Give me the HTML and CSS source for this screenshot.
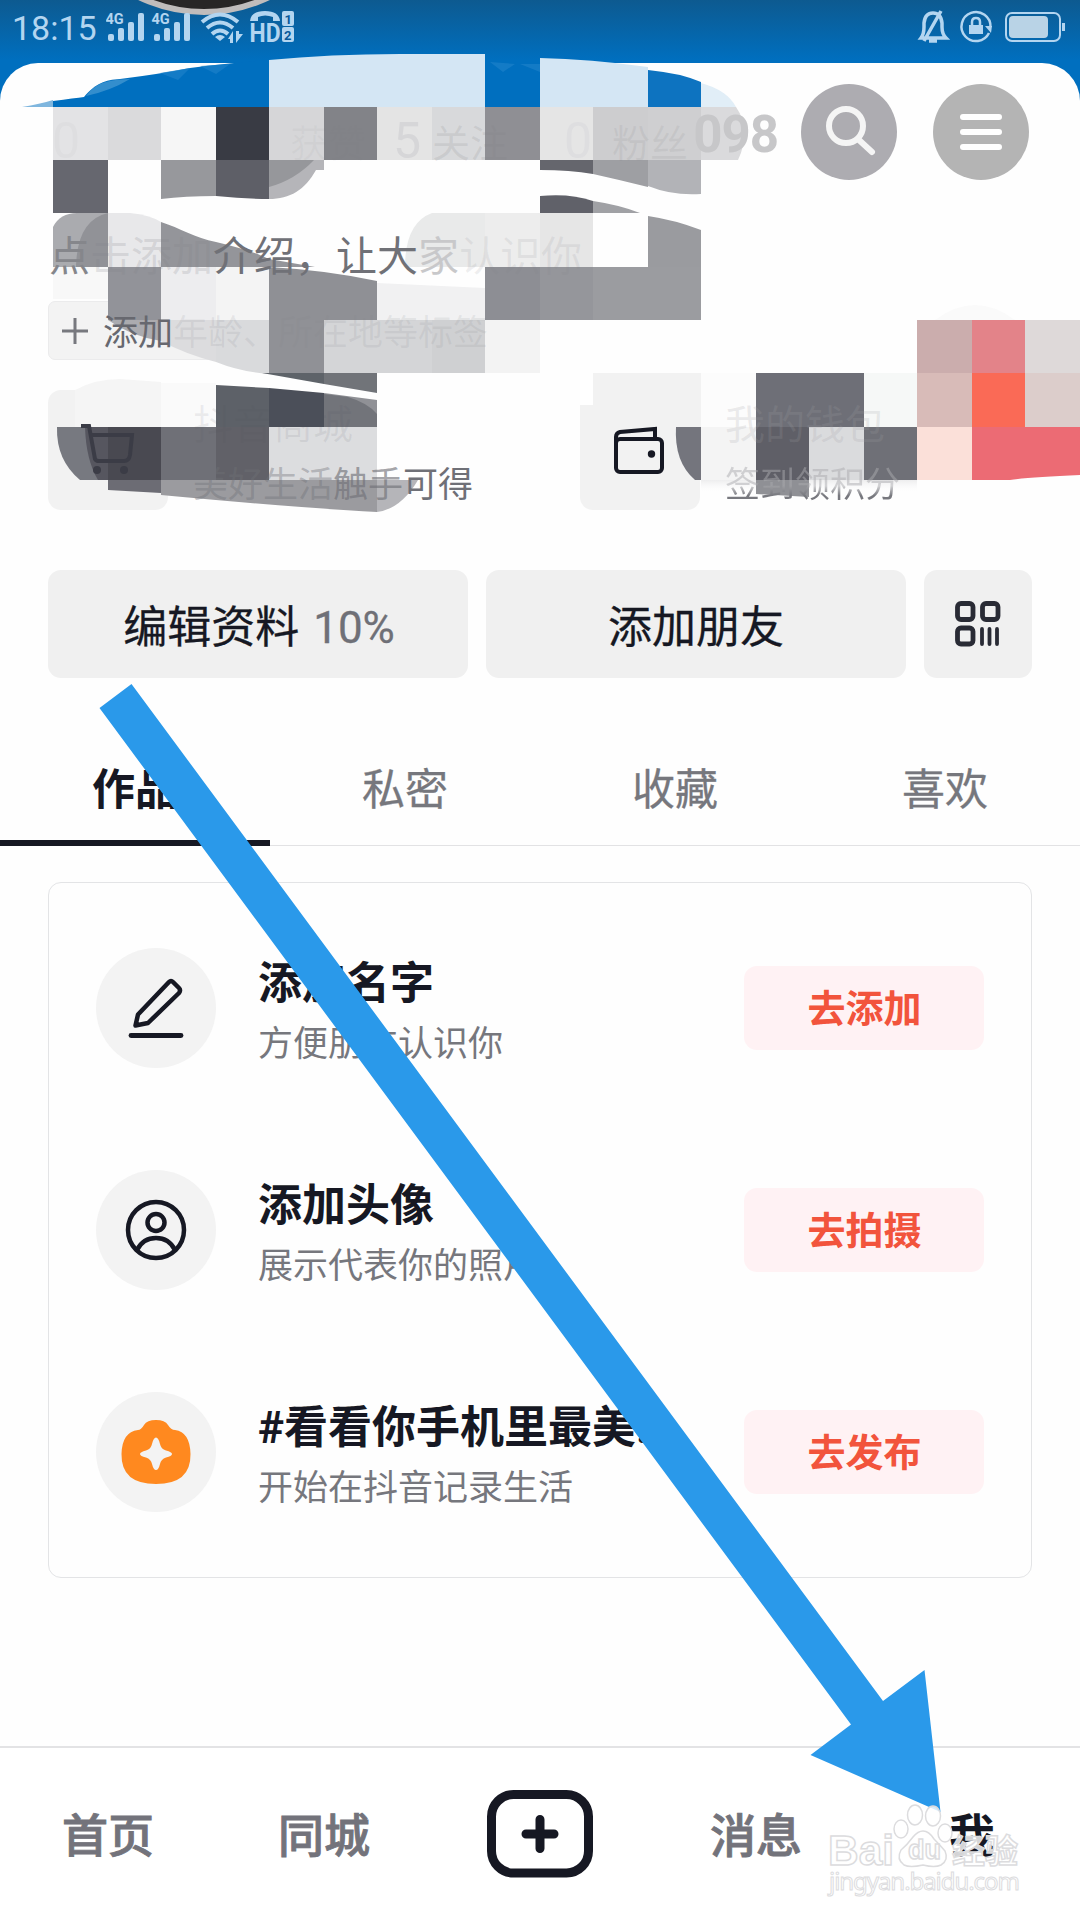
FILE: index.html
```html
<!DOCTYPE html>
<html lang="zh-CN">
<head>
<meta charset="utf-8">
<title>我</title>
<link rel="stylesheet" href="styles.css">
</head>
<body>
<div class="screen">
  <header class="status">
    <svg class="cover" width="150" height="20" viewBox="130 0 150 20"><circle cx="204" cy="-137" r="149" fill="#282626" stroke="#c0bcbb" stroke-width="6"/></svg>
    <div class="status-left">
      <span class="clock">18:15</span>
      <svg width="190" height="44" viewBox="106 0 190 44" fill="#b3d5f0">
        <g id="sig"><text x="105.500" y="24" class="net">4G</text><rect x="108" y="34" width="6" height="7" rx="2"/><rect x="118" y="28" width="6" height="13" rx="2"/><rect x="128" y="22" width="6" height="19" rx="2"/><rect x="138" y="13" width="6" height="28" rx="2"/></g>
        <use href="#sig" x="46"/>
        <g fill="none" stroke="#b3d5f0" stroke-width="4"><path d="M202 22Q220 7 238 22M207 28Q220 17 233 28M212 34Q220 27 228 34"/></g>
        <path d="M215 37Q220 33 225 37L220 41ZM228 39L233 31V43H230V39ZM236 31V43L243 34H239V31Z"/>
        <path d="M250 21Q251 11 265 11Q279 11 280 21H273V17Q265 14 258 17V21Z"/>
        <text x="249.500" y="42" class="hd" textLength="31" lengthAdjust="spacingAndGlyphs">HD</text>
        <rect x="282" y="11" width="12" height="15" rx="2"/><rect x="282" y="27" width="12" height="15" rx="2"/>
        <text x="284.500" y="24" class="sim">1</text><text x="284" y="40" class="sim">2</text>
      </svg>
    </div>
    <svg width="150" height="44" viewBox="916 0 150 44" fill="none" stroke="#b3d5f0" stroke-width="3.500">
      <path d="M921 38Q924 34 924 27V23Q925 13 933 13Q941 13 942 23V27Q942 34 946 38ZM924 41L941 11M929 41H937"/>
      <path d="M989 33A14.500 14.500 0 1 1 990.500 27" stroke-width="2.500"/><path d="M985 26H992L991 33Z" fill="#b3d5f0" stroke="none"/>
      <rect x="969" y="25" width="14" height="9" fill="#b3d5f0" stroke="none"/><path d="M972 25V22Q972 18 976 18Q980 18 980 22V25" stroke-width="2.500"/>
      <rect x="1006" y="13" width="54" height="28" rx="6" stroke-width="2"/><rect x="1009" y="16" width="39" height="22" rx="4" fill="#b9d3e6" stroke="none"/><path d="M1063.500 23V31" stroke-width="3"/>
    </svg>
  </header>

  <main class="sheet">
    <div class="topbar">
      <span class="account">098</span>
      <button class="round search" aria-label="搜索"><svg width="96" height="96" viewBox="0 0 96 96" fill="none" stroke="#f5f5f5" stroke-width="6" stroke-linecap="round"><circle cx="45" cy="42" r="17"/><path d="M58 56L71 68"/></svg></button>
      <button class="round menu" aria-label="菜单"><svg width="96" height="96" viewBox="0 0 96 96" stroke="#fff" stroke-width="6" stroke-linecap="round"><path d="M30 33H66M30 48H66M30 63H66"/></svg></button>
    </div>
    <p class="bio"><span class="dim1">点</span><span class="dim2">击添加</span>介绍，让大<span class="dim3">家</span><span class="dim4">认识你</span></p>
    <div class="tag"><svg width="28" height="28" viewBox="0 0 28 28" stroke="#77787e" stroke-width="3"><path d="M1 14H27M14 1V27"/></svg><span class="tag-text">添加<span class="dim5">年龄、所在地等标签</span></span></div>
    <div class="services">
      <div class="service">
        <div class="service-icon"></div>
        <div class="service-text"><div class="service-title ghost-dark">抖音商城</div><div class="service-sub"><span class="dim6">美好生活</span><span class="dim7">触手</span>可得</div></div>
      </div>
      <div class="service">
        <div class="service-icon"></div>
        <div class="service-text"><div class="service-title ghost-light">我的钱包</div><div class="service-sub fade-up">签到领积分</div></div>
      </div>
    </div>
    <div class="actions">
      <button class="action wide">编辑资料<span class="percent">10%</span></button>
      <button class="action wide">添加朋友</button>
      <button class="action qr" aria-label="二维码"><svg width="48" height="48" viewBox="0 0 48 48" fill="none" stroke="#292b35" stroke-width="4.800"><rect x="3.500" y="3.500" width="15.500" height="16" rx="3.500"/><rect x="28.500" y="3.500" width="15.500" height="16" rx="3.500"/><rect x="3.500" y="28" width="15.500" height="16" rx="3.500"/><path stroke-width="3.800" stroke-linecap="round" d="M28 29V44M35.500 29V44M43 29V44"/></svg></button>
    </div>
    <nav class="tabs"><a class="tab active">作品</a><a class="tab">私密</a><a class="tab">收藏</a><a class="tab">喜欢</a></nav>
    <section class="card">
      <div class="task">
        <div class="badge"><svg width="60" height="66" viewBox="126 975 60 66" fill="none" stroke="#161823" stroke-width="4.500" stroke-linejoin="round" stroke-linecap="round"><path d="M169 982Q171 980 173 982L179 988Q181 990 179 993L148 1023L135.500 1025.500L138 1014.500Z"/><path d="M131 1035.500H181" stroke-width="4.800"/></svg></div>
        <div class="task-text"><h3>添加名字</h3><p>方便朋友认识你</p></div>
        <button class="go">去添加</button>
      </div>
      <div class="task">
        <div class="badge"><svg width="64" height="64" viewBox="0 0 64 64" fill="none" stroke="#161823" stroke-width="4.500"><circle cx="32" cy="32" r="28"/><circle cx="32" cy="24.500" r="8.500"/><path d="M13 52Q19 40 32 40T51 52"/></svg></div>
        <div class="task-text"><h3>添加头像</h3><p>展示代表你的照片</p></div>
        <button class="go">去拍摄</button>
      </div>
      <div class="task">
        <div class="badge"><svg width="72" height="66" viewBox="120 1419 72 66"><path fill="#ff891f" d="M138 1430Q141 1430 144 1425Q147 1420 156 1420Q165 1420 168 1425Q171 1430 175 1430Q190 1432 190.500 1454Q191 1484 156 1484Q121 1484 121.500 1454Q122 1432 138 1430Z"/><path fill="#f3f3f3" d="M156 1437.500Q158.500 1437.500 160 1444Q161 1449 166 1450.500Q172 1452 172 1454Q172 1456 166 1457.500Q161 1459 160 1464Q158.500 1470 156 1470Q153.500 1470 152 1464Q151 1459 146 1457.500Q140 1456 140 1454Q140 1452 146 1450.500Q151 1449 152 1444Q153.500 1437.500 156 1437.500Z"/></svg></div>
        <div class="task-text"><h3>#看看你手机里最美...</h3><p>开始在抖音记录生活</p></div>
        <button class="go">去发布</button>
      </div>
    </section>
  </main>

  <footer class="nav">
    <a>首页</a><a>同城</a>
    <a class="create"><svg width="106" height="88" viewBox="0 0 106 88" fill="none" stroke="#161823" stroke-width="9"><rect x="4.500" y="4.500" width="97" height="78.500" rx="22"/><path d="M39 44H67M53 29.500V58.500" stroke-linecap="round"/></svg></a>
    <a>消息</a><a class="me">我</a>
  </footer>

  <!-- pixelated areas over the profile header -->
  <svg class="mosaic" width="1080" height="470" viewBox="0 50 1080 470">
    <defs><linearGradient id="mist" x1="0" y1="0" x2="0" y2="1"><stop offset="0" stop-color="#ededee"/><stop offset="1" stop-color="#fff" stop-opacity="0"/></linearGradient></defs>
    <path fill="#006fbf" d="M53 101Q75 98 84 97C96 83 105 80 120 79Q160 74 190 68Q235 62 269 60V107H53Z"/>
    <path fill="#7fb6de" d="M22 107Q40 104 53 100V107Z"/>
    <path fill="#489bd3" opacity=".7" d="M86 96C96 83 105 80 130 79Q110 91 86 96Z"/>
    <rect x="485" y="60" width="55" height="47" fill="#006fbf"/>
    <path fill="#1b80c9" opacity=".7" d="M160 73L190 68L178 80ZM200 66L230 64L216 74ZM490 62L515 64L503 72ZM520 64H540V72Z"/>
    <path fill="#d4e6f4" d="M269 60Q330 54 400 54H485V107H269ZM540 58Q590 59 648 67V107H540Z"/>
    <path fill="#0d73c0" d="M648 70Q680 73 701 82V107H648Z"/><path fill="#e1eef7" d="M701 83Q727 90 736 107H701Z"/>
    <g>
      <path fill="#e3e3e5" d="M53 107h55v53H53Z"/><path fill="#dadadc" d="M108 107h53v53h-53Z"/><path fill="#f6f6f6" d="M161 107h55v53h-55Z"/><path fill="#393b44" d="M216 107h53v53h-53Z"/><path fill="#d6d6d8" d="M269 107h55v53h-55Z"/><path fill="#828388" d="M324 107h53v53h-53Z"/><path fill="#e4e4e4" d="M377 107h55v53h-55Z"/><path fill="#d8d9db" d="M432 107h53v53h-53Z"/><path fill="#8f8f94" d="M485 107h55v53h-55Z"/><path fill="#e5e5e5" d="M540 107h53v53h-53Z"/><path fill="#cdcdcf" d="M593 107h55v53h-55Z"/><path fill="#cfcfd1" d="M648 107h53v53h-53Z"/><path fill="#dadadc" d="M701 107H736Q752 130 738 160H701Z"/>
    </g>
    <g>
      <path fill="#66676f" d="M53 160h55v53H53Z"/><path fill="#97989c" d="M161 160H216V196Q185 196 161 199Z"/><path fill="#5e5f67" d="M216 160H269V199Q245 199 216 196Z"/><path fill="#b5b5b9" d="M269 160H324V170H316C305 190 290 199 269 199Z"/><path fill="#96979b" d="M269 160H314Q295 180 269 187Z"/>
      <path fill="#65666d" d="M540 160H593V174Q570 170 540 170Z"/><path fill="#9e9fa3" d="M593 160H648V187Q620 180 593 174Z"/><path fill="#b2b3b7" d="M648 160H701V194Q673 196 648 186Z"/>
      <path fill="#606169" d="M540 196Q570 193 593 201V213H540Z"/><path fill="#a0a1a5" d="M593 201Q620 205 640 213H593Z"/>
    </g>
    <g>
      <path fill="#aaabaf" d="M53 267V227Q60 213 77 213H108V267Z"/><path fill="#919297" d="M76 267Q77 220 108 213V267Z"/><path fill="#e8e8ea" d="M108 213H130Q150 215 161 222V267H108Z"/><path fill="#94959a" d="M161 222C180 228 195 238 216 242Q250 250 269 259L315 267H161Z"/>
      <path fill="#e9eaea" d="M432 213H485V267H405Q405 223 432 213Z"/><path fill="#ededed" d="M485 213h55v54h-55Z"/><path fill="#e6e6e6" d="M540 213h53v54h-53Z"/><path fill="#9a9b9f" d="M648 216Q675 220 701 230V267H648Z"/>
    </g>
    <g>
      <path fill="#f8f8f8" d="M53 267h55v32H53Z"/><path fill="#929399" d="M108 267h53v53h-53Z"/><path fill="#ededef" d="M161 267h55v53h-55Z"/><path fill="#f4f4f4" d="M216 267h53v53h-53Z"/><path fill="#8f9095" d="M269 267Q325 270 377 281V320H269Z"/><path fill="#f1f1f2" d="M377 283L485 288V320H377Z"/><path fill="#8d8e94" d="M485 267h55v53h-55Z"/><path fill="#95969b" d="M540 267h53v53h-53Z"/><path fill="#9b9ca0" d="M593 267h108v53H593Z"/>
    </g>
    <g>
      <path fill="#ababaf" d="M108 320H161V341Q130 336 108 320Z"/><path fill="#dcdcde" d="M161 320H216V362Q185 354 161 341Z"/><path fill="#d9dadc" d="M216 320H269V374Q241 372 216 362Z"/><path fill="#909196" d="M269 320h55v53h-55Z"/><path fill="#d4d5d7" d="M324 320h108v53H324Z"/><path fill="#cfd0d2" d="M432 320h53v53h-53Z"/><path fill="#f3f3f3" d="M485 320h55v53h-55Z"/>
      <path fill="#cbadad" d="M917 320h55v53h-55Z"/><path fill="#e38389" d="M972 320h53v53h-53Z"/><path fill="#ded9d9" d="M1025 320h55v53h-55Z"/><path fill="#fafafa" d="M935 320Q975 290 1015 320Z"/>
    </g>
    <g>
      <path fill="#f5f5f5" d="M75 390Q95 379 120 379L161 382V427H75Z"/><path fill="#fafafa" d="M161 383h55v44h-55Z"/><path fill="#5e6369" d="M262 373H324V384Z"/><path fill="#717479" d="M324 373H377V393L324 384Z"/><path fill="#5d6168" d="M216 385L269 388V427H216Z"/><path fill="#4b4f59" d="M269 388L324 393V427H269Z"/><path fill="#909196" d="M324 393L377 400V427H324Z"/><path fill="#72747a" d="M324 394L348 397Q368 403 377 414V427H324Z"/>
      <path fill="#fff" d="M580 380h13v25h-13Z"/><path fill="#f2f2f2" d="M593 373h108v54H593Z"/><path fill="#fcfcfc" d="M701 373h55v54h-55Z"/><path fill="#6e6f77" d="M756 373h108v54H756Z"/><path fill="#f6f8f7" d="M864 373h53v54h-53Z"/><path fill="#d8bbb8" d="M917 373h55v54h-55Z"/><path fill="#fa6a56" d="M972 373h53v54h-53Z"/><path fill="#dccdcb" d="M1025 373h55v54h-55Z"/>
    </g>
    <g>
      <path fill="#777980" d="M57 427H108V480H80Q56 460 57 427Z"/><path fill="#56565f" d="M85 427H108V480H98Q86 460 85 427Z"/><path fill="#494951" d="M108 427h53v53h-53Z"/><path fill="#6f7077" d="M161 427h55v53h-55Z"/><path fill="#616168" d="M216 427h53v53h-53Z"/><path fill="#dcdddf" d="M269 427h108v53H269Z"/>
      <path fill="#74757d" d="M676 427H701V480H695Q674 462 676 427Z"/><path fill="#f4f4f4" d="M701 427h55v53h-55Z"/><path fill="#5f5f67" d="M756 427h53v53h-53Z"/><path fill="#dadbdd" d="M809 427h55v53h-55Z"/><path fill="#6f7077" d="M864 427h53v53h-53Z"/><path fill="#fbe0d9" d="M917 427h55v53h-55Z"/><path fill="#ec6b74" d="M972 427H1080V475Q1030 477 1010 480H972Z"/>
      <path fill="#6c6c74" d="M108 480H161V493L108 490Z"/><path fill="#9b9b9f" d="M161 480H377V512Q300 508 161 495Z"/><path fill="#b5b5b9" d="M377 480H418Q401 509 377 512Z"/>
      <path fill="url(#mist)" d="M701 480H917V493H701Z"/><path fill="#8f9095" d="M756 480H809V497L756 494Z"/>
    </g>
    <g fill="none" stroke="#3b3c46" stroke-width="4"><path d="M81 426H89L95 459Q96 461 99 461H124Q129 461 130 455L132 435H91"/></g><circle cx="97" cy="470" r="4" fill="#3b3c46"/><circle cx="124" cy="470" r="4" fill="#3b3c46"/>
    <g fill="none" stroke="#161823" stroke-width="4"><rect x="616" y="439" width="46" height="33" rx="4"/><path d="M616 447V437Q616 433 620 432L655 429V439"/></g><circle cx="651.500" cy="454" r="3.700" fill="#161823"/>
    <g class="stat"><text x="52" y="158" fill="#dedee0">0</text><text x="393" y="158" fill="#d6d6d8">5</text><text x="564" y="158" fill="#dedee0">0</text><g class="stat-label"><text x="290" y="157" fill="#808186" fill-opacity=".06">获赞</text><text x="432" y="157" fill="#808186" fill-opacity=".16">关注</text><text x="612" y="157" fill="#808186" fill-opacity=".12">粉丝</text></g></g>
  </svg>

  <svg class="arrow" width="842" height="1130" viewBox="99 683 842 1130"><path fill="#2a99ea" d="M131.500 684L883 1701L924.500 1670L940.500 1812L810.500 1755L851 1724.500L99.500 708Z"/></svg>

  <svg class="watermark" width="200" height="100" viewBox="824 1800 200 100">
    <g fill="#fff" fill-opacity=".82" stroke="#dcdcde" stroke-width="1.500">
      <ellipse cx="901" cy="1829" rx="7" ry="9"/><ellipse cx="915" cy="1815" rx="7.500" ry="10"/><ellipse cx="933" cy="1816" rx="7.500" ry="10"/><ellipse cx="945" cy="1833" rx="7" ry="9"/>
      <path d="M923 1831Q929 1831 934 1839Q940 1845 945 1851Q949 1860 941 1865Q935 1868 923 1865Q910 1868 904 1865Q896 1859 901 1850Q907 1845 913 1837Q918 1831 923 1831Z"/>
      <text class="wm-name" x="828" y="1865" textLength="66" lengthAdjust="spacingAndGlyphs">Bai</text><text class="wm-du" x="908" y="1859">du</text>
      <text class="wm-cn" x="952" y="1863" textLength="66">经验</text><text class="wm-url" x="829" y="1890" textLength="191">jingyan.baidu.com</text>
    </g>
  </svg>
</div>
</body>
</html>
```

FILE: styles.css
```css
* { box-sizing: border-box; }
body { margin: 0; font-family: Roboto, "Noto Sans CJK SC", sans-serif; color: #161823; }
button { border: 0; padding: 0; font: inherit; color: inherit; }
h3, p { margin: 0; }
svg { display: block; flex: none; }

.screen { position: relative; width: 1080px; height: 1920px; overflow: hidden; display: flex; flex-direction: column; background: linear-gradient(#0d5a90 0, #006fbf 60px, #006fbf 110px, #fefefe 110px); }

.status { height: 63px; padding: 0 14px 0 12px; display: flex; justify-content: space-between; align-items: flex-start; position: relative; }
.status-left { display: flex; gap: 8px; position: relative; }
.clock { width: 86px; font-size: 34px; line-height: 57px; color: #b3d5f0; letter-spacing: 0; }
.cover { position: absolute; left: 130px; top: 0; }
.net { font: 700 14.500px Roboto, sans-serif; }
.hd { font: 700 25px Roboto, sans-serif; }
.sim { font: 700 13px Roboto, sans-serif; fill: #07589a; }

.sheet { flex: 1; display: flex; flex-direction: column; align-items: stretch; background: #fefefe; border-radius: 38px 38px 0 0; padding: 21px 48px 0; }
.topbar { height: 96px; padding-right: 3px; display: flex; justify-content: flex-end; align-items: center; }
.account { position: relative; z-index: 2; font-size: 51px; font-weight: 700; line-height: 96px; color: #c7c7c9; margin-right: 23px; letter-spacing: -1px; padding-top: 6px; }
.round { width: 96px; height: 96px; border-radius: 50%; }
.search { background: #adacb1; margin-right: 36px; }
.menu { background: #b4b4b4; }
.bio { position: relative; z-index: 2; margin-top: 47px; height: 60px; padding-left: 1px; font-size: 41px; line-height: 60px; color: #707177; white-space: nowrap; }
.dim1 { color: #85868b; }
.dim2 { color: rgba(128,129,136,.2); }
.dim3 { color: #c8c8ca; }
.dim4 { color: rgba(128,129,136,.12); }
.tag { margin-top: 14px; width: 452px; height: 59px; padding-left: 12px; display: flex; align-items: center; gap: 14px; background: #f3f3f3; border: 1px solid #ebebec; border-radius: 7px; }
.tag > svg, .tag-text { position: relative; z-index: 2; }
.tag-text { font-size: 35px; line-height: 50px; color: #67686f; padding-top: 6px; }
.dim5 { color: rgba(128,129,136,.13); }
.services { margin-top: 30px; height: 120px; display: grid; grid-template-columns: 532px 1fr; }
.service { display: flex; gap: 25px; }
.service-icon { width: 120px; height: 120px; border-radius: 13px; background: #f2f2f2; }
.service-text { position: relative; z-index: 2; padding-top: 6px; white-space: nowrap; }
.service-title { font-size: 40px; line-height: 60px; }
.ghost-dark { color: rgba(80,82,90,.09); }
.ghost-light { color: rgba(160,160,165,.2); }
.service-sub { font-size: 35px; line-height: 60px; color: #6f7077; }
.dim6 { color: rgba(112,113,119,.4); }
.dim7 { color: rgba(112,113,119,.65); }
.fade-up { background: linear-gradient(rgba(170,170,174,.5) 50%, #77787e 66%); -webkit-background-clip: text; background-clip: text; color: transparent; }

.actions { margin-top: 60px; height: 108px; display: flex; gap: 18px; }
.action { display: flex; align-items: center; justify-content: center; background: #f0f0f0; border-radius: 13px; font-size: 44px; line-height: 60px; }
.wide { width: 420px; gap: 14px; padding-top: 7px; -webkit-text-stroke: .3px; }
.wide:first-child { padding-left: 2px; }
.percent { color: #6f7077; font-size: 44px; }
.qr { width: 108px; }
.tabs { margin: 60px -48px 0; height: 108px; display: grid; grid-template-columns: repeat(4, 1fr); border-bottom: 1px solid #e2e2e4; }
.tab { height: 108px; line-height: 105px; text-align: center; font-size: 43px; color: #76777d; -webkit-text-stroke: .3px; }
.active { font-weight: 700; color: #161823; border-bottom: 6px solid #161823; -webkit-text-stroke: 0; }

.card { margin-top: 36px; height: 696px; padding: 65px 47px; border: 1px solid #e3e4e6; border-radius: 13px; display: flex; flex-direction: column; gap: 102px; }
.task { height: 120px; display: flex; align-items: center; }
.badge { width: 120px; height: 120px; border-radius: 50%; background: #f3f3f3; display: flex; align-items: center; justify-content: center; }
.task-text { width: 486px; margin-left: 42px; padding-top: 10px; white-space: nowrap; }
.task-text h3 { font-size: 44px; line-height: 64px; font-weight: 700; }
.task-text p { font-size: 35px; line-height: 58px; color: #76777d; }
.go { width: 240px; height: 84px; padding: 0 0 5px 1px; border-radius: 13px; background: #fff2f4; color: #f2543c; font-size: 38px; font-weight: 700; }

.nav { height: 174px; border-top: 2px solid #e3e3e5; background: #fff; display: grid; grid-template-columns: repeat(5, 1fr); font-size: 46px; font-weight: 500; color: #73737b; text-align: center; line-height: 176px; -webkit-text-stroke: .9px; }
.create { display: flex; justify-content: center; padding-top: 42px; }
.me { color: #161823; font-weight: 700; -webkit-text-stroke: 0; }

.mosaic { position: absolute; left: 0; top: 50px; z-index: 1; }
.arrow { position: absolute; left: 99px; top: 683px; z-index: 3; }
.watermark { position: absolute; left: 824px; top: 1800px; z-index: 4; }
.stat { font-size: 50px; }
.stat-label { font-size: 38px; }
.wm-name { font: 700 43px "Liberation Sans", sans-serif; }
.wm-du { font: 700 27px "Liberation Sans", sans-serif; }
.wm-cn { font: 700 33px "Noto Sans CJK SC", sans-serif; }
.wm-url { font: 400 24px "Noto Sans", sans-serif; stroke-width: 1px; }
```
